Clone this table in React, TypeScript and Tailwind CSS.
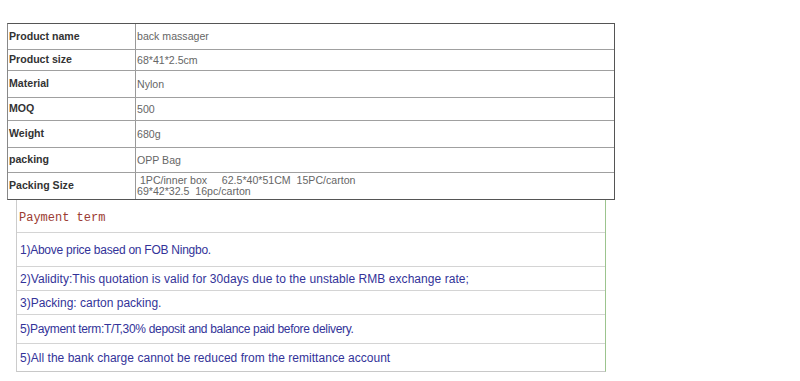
const specs = [
  { label: 'Product name', value: ['back massager'], h: 'h-[25px]' },
  { label: 'Product size', value: ['68*41*2.5cm'], h: 'h-[21px]' },
  { label: 'Material', value: ['Nylon'], h: 'h-[27px]' },
  { label: 'MOQ', value: ['500'], h: 'h-[23px]' },
  { label: 'Weight', value: ['680g'], h: 'h-[27px]' },
  { label: 'packing', value: ['OPP Bag'], h: 'h-[25px]' },
  {
    label: 'Packing Size',
    value: ['\u00a01PC/inner box\u00a0\u00a0\u00a0\u00a0\u00a062.5*40*51CM\u00a0\u00a015PC/carton', '69*42*32.5\u00a0\u00a016pc/carton'],
    h: 'h-[27px]',
  },
];

const terms = [
  { text: '1)Above price based on FOB Ningbo.', h: 'h-[34px]', track: 'tracking-[-0.25px]' },
  { text: '2)Validity:This quotation is valid for 30days due to the unstable RMB exchange rate;', h: 'h-[24px]', track: 'tracking-[0.05px]' },
  { text: '3)Packing: carton packing.', h: 'h-[24px]', track: '' },
  { text: '5)Payment term:T/T,30% deposit and balance paid before delivery.', h: 'h-[29px]', track: 'tracking-[-0.32px]' },
  { text: '5)All the bank charge cannot be reduced from the remittance account', h: 'h-[28px]', track: 'tracking-[0.03px]' },
];

export default function App() {
  return (
    <div className="w-[800px] h-[381px] bg-white overflow-hidden pt-[23px] font-['Liberation_Sans',Arial,sans-serif]">
      {/* spec table */}
      <div className="ml-[7px] w-[608px] border border-[#555] border-l-[#888]">
        {specs.map((row, i) => (
          <div key={row.label} className={`flex ${row.h} ${i > 0 ? 'border-t border-[#a0a0a0]' : ''}`}>
            <div className="w-[128px] shrink-0 border-r border-[#999] flex items-center pl-[1px] text-[10.6px] font-bold text-[#333]">
              {row.label}
            </div>
            <div className="flex-1 flex flex-col justify-center pl-[1px] text-[10.6px] leading-[11px] text-[#666]">
              {row.value.map((v) => (
                <span key={v} className="whitespace-pre">{v}</span>
              ))}
            </div>
          </div>
        ))}
      </div>

      {/* payment terms */}
      <div className="ml-[16px] w-[590px] border-l border-r border-b border-l-[#ccc] border-r-[#9cc48e] border-b-[#c8c8c8]">
        <div className="h-[32px] flex items-center pl-[2px] pt-[3px] font-['Liberation_Mono',monospace] text-[12px] text-[#9b3b32]">
          Payment term
        </div>
        {terms.map((t) => (
          <div key={t.text} className={`${t.h} ${t.track} text-[12px] border-t border-[#d4d4d4] flex items-center pl-[3px] text-[#333399]`}>
            {t.text}
          </div>
        ))}
      </div>
    </div>
  );
}
